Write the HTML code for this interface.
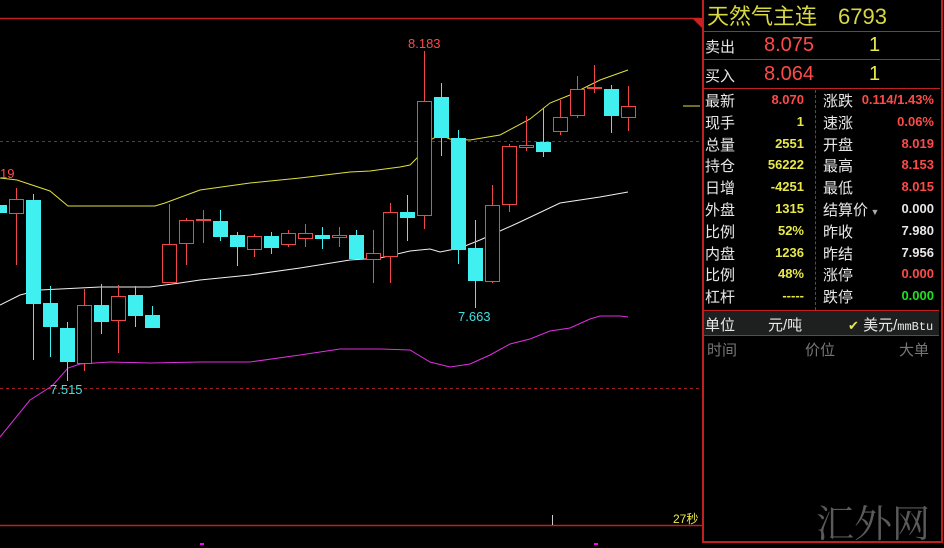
<!DOCTYPE html>
<html><head><meta charset="utf-8"><style>
*{margin:0;padding:0}
body{width:944px;height:545px;background:#000;overflow:hidden;position:relative;font-family:"Liberation Sans","Noto Sans CJK SC",sans-serif}
.t{position:absolute;white-space:nowrap}
.w{color:#e8e8e8}.r{color:#ff4a4a}.y{color:#e8e84a}.g{color:#20e020}.gr{color:#777}
.lab{font-size:15px;color:#e8e8e8}
.v{font-size:13px;font-weight:bold;text-align:right}
</style></head><body>
<svg width="944" height="545" style="position:absolute;left:0;top:0">
<line x1="0" y1="18.5" x2="700" y2="18.5" stroke="#c02020" stroke-width="1.5"/>
<polygon points="692,18 702,18 702,28" fill="#d02020"/>
<line x1="0" y1="141.5" x2="700" y2="141.5" stroke="#a02020" stroke-dasharray="3,3"/>
<line x1="0" y1="388.5" x2="700" y2="388.5" stroke="#a02020" stroke-dasharray="3,3"/>
<line x1="0" y1="525.5" x2="702" y2="525.5" stroke="#c02020" stroke-width="1.5"/>
<line x1="552.5" y1="515" x2="552.5" y2="525" stroke="#ccc"/>
<rect x="200" y="543" width="4" height="2" fill="#f0f"/><rect x="594" y="543" width="4" height="2" fill="#f0f"/>
<line x1="683" y1="106" x2="700" y2="106" stroke="#e0e040"/>
<polyline fill="none" stroke="#e0e040" stroke-width="1" points="0,178 17,180 50,191 68,206 155,206 165,203 200,190 250,183 300,178 350,172 370,171 400,167 410,165 420,155 430,140 440,135 450,139 470,140 500,135 530,119 550,103 570,95 600,80 628,70"/>
<polyline fill="none" stroke="#f0f0f0" stroke-width="1" points="0,305 20,295 40,290 100,287 150,287 180,283 200,280 250,275 300,268 350,260 380,258 410,251 430,249 440,252 460,248 480,240 520,222 560,203 600,197 628,192"/>
<polyline fill="none" stroke="#e030e0" stroke-width="1" points="0,437 30,400 52,386 68,368 80,364 110,362 150,363 200,362 250,362 300,355 340,349 380,349 410,350 430,362 450,367 470,364 490,355 510,344 530,339 550,331 570,328 590,319 600,316 620,316 628,317"/>
<g id="c"></g>
</svg>
<script>
var d=[[-8,'c',205,213,205,213],[9,'r',199,214,188,265],[26,'c',200,304,194,360],[43,'c',303,327,286,357],[60,'c',328,362,322,381],[77,'r',305,364,289,371],[94,'c',305,322,284,334],[111,'r',296,321,285,353],[128,'c',295,316,286,327],[145,'c',315,328,306,328],[162,'r',244,283,204,283],[179,'r',220,244,218,265],[196,'r',219,221,210,243],[213,'c',221,237,210,241],[230,'c',235,247,232,266],[247,'r',236,250,234,257],[264,'c',236,248,232,254],[281,'r',233,245,230,247],[298,'r',233,239,224,247],[315,'c',235,239,227,249],[332,'r',235,238,227,247],[349,'c',235,259,230,259],[366,'r',253,260,230,283],[383,'r',212,257,203,283],[400,'c',212,218,195,241],[417,'r',101,216,51,229],[434,'c',97,138,83,156],[451,'c',138,250,130,264],[468,'c',248,281,220,308],[485,'r',205,282,185,283],[502,'r',146,205,144,212],[519,'r',145,148,116,151],[536,'c',142,152,108,157],[553,'r',117,132,100,135],[570,'r',89,116,76,118],[587,'r',87,89,65,93],[604,'c',89,116,85,133],[621,'r',106,118,86,131]];
var s='';d.forEach(function(a){var x=a[0],cx=x+7.5,col=a[1]=='r'?'#f04848':'#40f0f0';
s+='<line x1="'+cx+'" y1="'+a[4]+'" x2="'+cx+'" y2="'+a[5]+'" stroke="'+col+'"/>';
if(a[1]=='r')s+='<rect x="'+(x+0.5)+'" y="'+(a[2]+0.5)+'" width="14" height="'+Math.max(a[3]-a[2]-1,1)+'" fill="#000" stroke="'+col+'"/>';
else s+='<rect x="'+x+'" y="'+a[2]+'" width="15" height="'+(a[3]-a[2])+'" fill="'+col+'"/>';});
document.getElementById('c').innerHTML=s;
</script>
<div class="t r" style="left:408px;top:36px;font-size:13px">8.183</div>
<div class="t" style="left:458px;top:309px;font-size:13px;color:#40e0e0">7.663</div>
<div class="t" style="left:50px;top:382px;font-size:13px;color:#40e0e0">7.515</div>
<div class="t r" style="left:0;top:166px;font-size:13px">19</div>
<div class="t y" style="left:673px;top:510px;font-size:12px">27秒</div>

<div style="position:absolute;left:702px;top:0;width:237px;height:541px;border-left:2px solid #c02020;border-right:2px solid #c02020;border-bottom:2px solid #c02020"></div>
<div style="position:absolute;left:703px;top:31px;width:237px;border-top:1.5px solid #c02020"></div>
<div style="position:absolute;left:703px;top:59px;width:237px;border-top:1.5px solid #c02020"></div>
<div style="position:absolute;left:703px;top:88px;width:237px;border-top:1.5px solid #c02020"></div>
<div style="position:absolute;left:815px;top:90px;height:220px;border-left:1px dashed #c02020"></div>
<div style="position:absolute;left:704px;top:310px;width:235px;height:24px;background:#1e2020;border-top:1.5px solid #c02020;border-bottom:1.5px solid #c02020"></div>

<div class="t" style="left:707px;top:-2px;font-size:22px;line-height:34px;color:#d8d840;font-family:'Noto Sans CJK SC',sans-serif">天然气主连</div>
<div class="t" style="left:838px;top:4px;font-size:22px;color:#d8d840">6793</div>
<div class="t lab" style="left:705px;top:36px">卖出</div>
<div class="t r" style="left:764px;top:34px;font-size:20px">8.075</div>
<div class="t y" style="left:869px;top:34px;font-size:20px">1</div>
<div class="t lab" style="left:705px;top:65px">买入</div>
<div class="t r" style="left:764px;top:63px;font-size:20px">8.064</div>
<div class="t y" style="left:869px;top:63px;font-size:20px">1</div>

<div id="rows"></div>
<script>
var L=[['最新','8.070','r','涨跌','0.114/1.43%','r'],['现手','1','y','速涨','0.06%','r'],['总量','2551','y','开盘','8.019','r'],['持仓','56222','y','最高','8.153','r'],['日增','-4251','y','最低','8.015','r'],['外盘','1315','y','结算价','0.000','w'],['比例','52%','y','昨收','7.980','w'],['内盘','1236','y','昨结','7.956','w'],['比例','48%','y','涨停','0.000','r'],['杠杆','-----','y','跌停','0.000','g']];
var h='';L.forEach(function(a,i){var y=90+i*21.8;
h+='<div class="t lab" style="left:705px;top:'+y+'px">'+a[0]+'</div>';
h+='<div class="t v '+a[2]+'" style="right:140px;top:'+(y+2)+'px">'+a[1]+'</div>';
h+='<div class="t lab" style="left:823px;top:'+y+'px">'+a[3]+(i==5?'<span style="font-size:9px;color:#aaa"> ▼</span>':'')+'</div>';
h+='<div class="t v '+a[5]+'" style="right:10px;top:'+(y+2)+'px">'+a[4]+'</div>';});
document.getElementById('rows').innerHTML=h;
</script>
<div class="t lab" style="left:705px;top:314px">单位</div>
<div class="t lab" style="left:768px;top:314px">元/吨</div>
<div class="t" style="left:848px;top:314px;font-size:15px;color:#e8e8e8"><span class="y" style="font-size:13px">✔</span> 美元/<span style="font-family:'Liberation Mono',monospace;font-size:12px">mmBtu</span></div>
<div class="t gr" style="left:707px;top:339px;font-size:15px">时间</div>
<div class="t gr" style="left:805px;top:339px;font-size:15px">价位</div>
<div class="t gr" style="left:899px;top:339px;font-size:15px">大单</div>
<div class="t" style="left:816px;top:493px;font-size:38px;color:#5a5a5a;font-family:'Noto Serif CJK SC',serif">汇外网</div>
</body></html>
